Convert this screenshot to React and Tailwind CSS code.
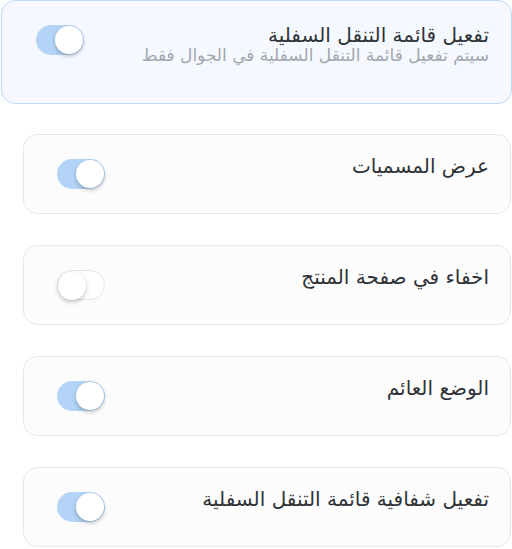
import React, { useState } from 'react';

function Toggle({ on, onChange }) {
  return (
    <button
      type="button"
      onClick={onChange}
      className={`relative shrink-0 w-12 h-[30px] rounded-full transition-colors ${
        on ? 'bg-[#b3d4f7]' : 'bg-white border border-[#e3e5e8]'
      }`}
    >
      <span
        className={`absolute top-[1px] w-7 h-7 rounded-full bg-white shadow-[0_2px_4px_rgba(0,0,0,0.25)] transition-all ${
          on ? 'left-[19px]' : 'left-0'
        }`}
      />
    </button>
  );
}

const rows = [
  { label: 'عرض المسميات', on: true },
  { label: 'اخفاء في صفحة المنتج', on: false },
  { label: 'الوضع العائم', on: true },
  { label: 'تفعيل شفافية قائمة التنقل السفلية', on: true },
];

export default function App() {
  const [main, setMain] = useState(true);
  const [opts, setOpts] = useState(rows.map((r) => r.on));

  return (
    <div dir="rtl" className="w-[512px] bg-white font-['DejaVu_Sans',sans-serif] text-[#2f3337]">
      {/* main switch */}
      <div className="h-[104px] w-[511px] rounded-[14px] border border-[#bcdaf8] bg-[#f5f9ff] pr-[22px] pl-[34px] pt-[22px] flex items-start justify-between">
        <div className="flex flex-col mt-[1px]">
          <span className="text-[20px] leading-[22px]">تفعيل قائمة التنقل السفلية</span>
          <span className="text-[17px] leading-[18px] text-[#a3a7ae]">سيتم تفعيل قائمة التنقل السفلية في الجوال فقط</span>
        </div>
        <div className="pt-[2px]">
          <Toggle on={main} onChange={() => setMain(!main)} />
        </div>
      </div>

      <div className="flex flex-col gap-[31px] pt-[30px] pr-[1px]">
        {rows.map((r, i) => (
          <div
            key={r.label}
            className="h-[80px] ml-[23px] rounded-[14px] border border-[#e2e8f0] bg-[#fcfcfd] pr-[21px] pl-[33px] flex items-center justify-between"
          >
            <span className="text-[20px] leading-[26px] -mt-[16px]">{r.label}</span>
            <Toggle
              on={opts[i]}
              onChange={() => setOpts(opts.map((v, j) => (j === i ? !v : v)))}
            />
          </div>
        ))}
      </div>
    </div>
  );
}
